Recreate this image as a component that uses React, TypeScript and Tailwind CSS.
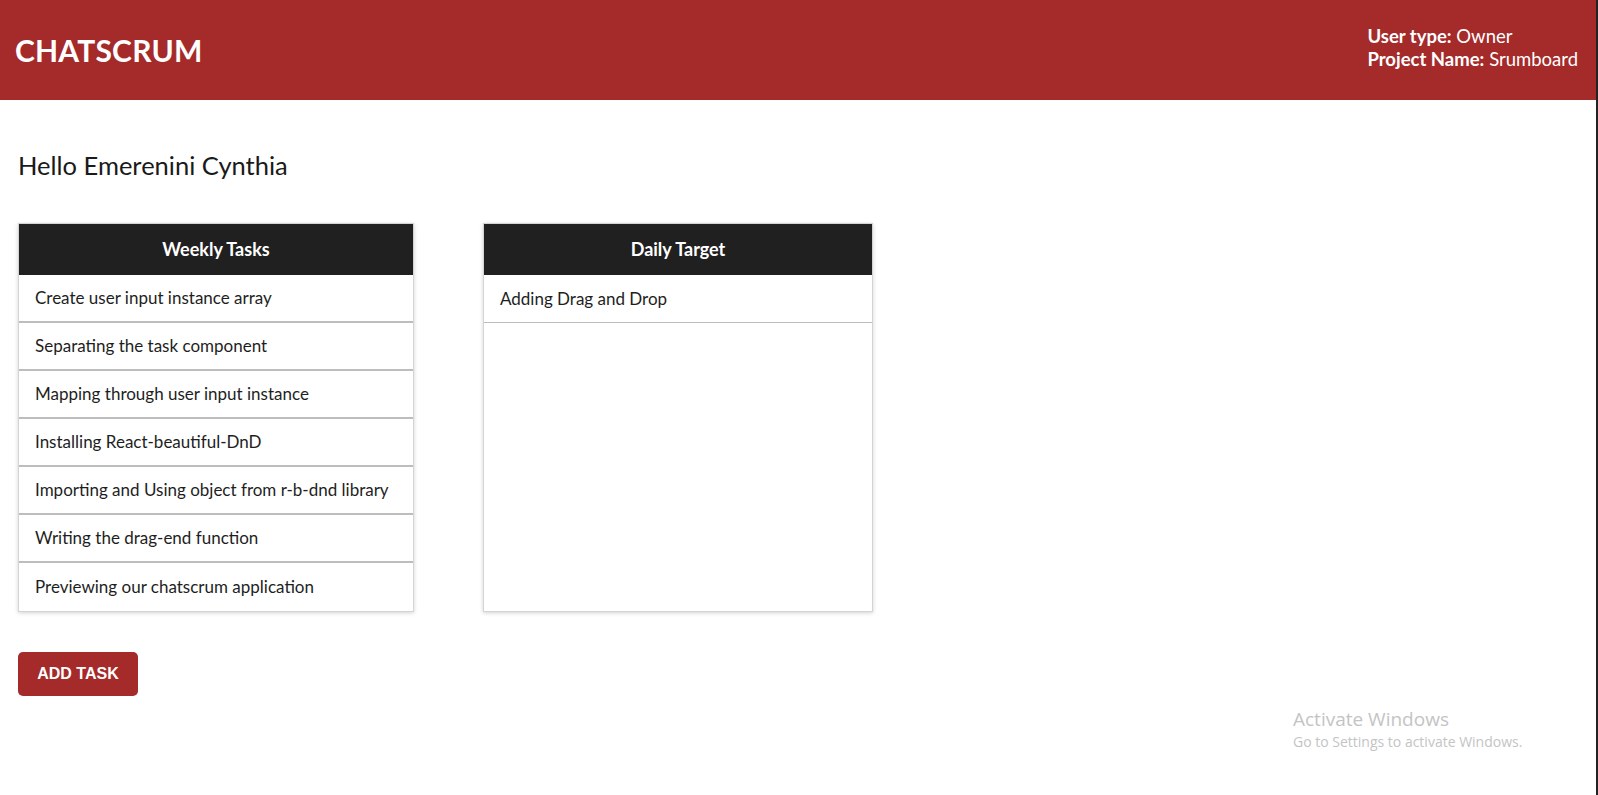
const weeklyTasks = [
  "Create user input instance array",
  "Separating the task component",
  "Mapping through user input instance",
  "Installing React-beautiful-DnD",
  "Importing and Using object from r-b-dnd library",
  "Writing the drag-end function",
  "Previewing our chatscrum application",
];

const dailyTargets = ["Adding Drag and Drop"];

function Column({ title, items, width, fixed }: { title: string; items: string[]; width: string; fixed?: boolean }) {
  return (
    <div
      className={`flex flex-col border border-[#d4d4d4] bg-white shadow-[0_1px_4px_rgba(0,0,0,0.18)] ${width} ${
        fixed ? "h-[389px]" : ""
      }`}
    >
      <div className="flex h-[51px] items-center justify-center bg-[#202020] text-[18px] font-bold text-white">
        {title}
      </div>
      {items.map((item, i) => (
        <div
          key={item}
          className={`flex h-[48px] items-center px-[16px] text-[17px] text-[#1e1e1e] ${
            fixed ? "h-[47px] border-b border-[#bdbdbd]" : i < items.length - 1 ? "border-b-2 border-[#bdbdbd]" : ""
          }`}
        >
          {item}
        </div>
      ))}
    </div>
  );
}

export default function App() {
  return (
    <div className="relative min-h-screen border-r-2 border-[#222] bg-white font-['Lato','Noto_Sans',sans-serif]">
      <header className="flex h-[100px] items-center justify-between bg-[#a52a2a] pl-[15px] pr-[18px] text-white">
        <h1 className="text-[30px] font-bold tracking-[0.2px]">CHATSCRUM</h1>
        <div className="mb-[4px] flex flex-col text-[18.5px] leading-[23px]">
          <span>
            <b>User type:</b> Owner
          </span>
          <span>
            <b>Project Name:</b> Srumboard
          </span>
        </div>
      </header>

      <main className="flex flex-col items-start pl-[18px] pt-[47px]">
        <p className="h-[36px] text-[25.5px] leading-[36px] text-[#1a1a1a]">Hello Emerenini Cynthia</p>

        <div className="mt-[40px] flex items-start gap-[69px]">
          <Column title="Weekly Tasks" items={weeklyTasks} width="w-[396px]" />
          <Column title="Daily Target" items={dailyTargets} width="w-[390px]" fixed />
        </div>

        <button
          type="button"
          className="mt-[40px] h-[44px] w-[120px] rounded-[5px] bg-[#a52a2a] font-['Liberation_Sans',Arial,sans-serif] text-[16px] font-bold text-white"
        >
          ADD TASK
        </button>
      </main>

      <div className="pointer-events-none absolute left-[1293px] top-[706px] flex flex-col font-['Open_Sans',sans-serif] text-[#c4c4c4]">
        <span className="text-[19px] leading-[26px]">Activate Windows</span>
        <span className="text-[14px] leading-[20px]">Go to Settings to activate Windows.</span>
      </div>
    </div>
  );
}
